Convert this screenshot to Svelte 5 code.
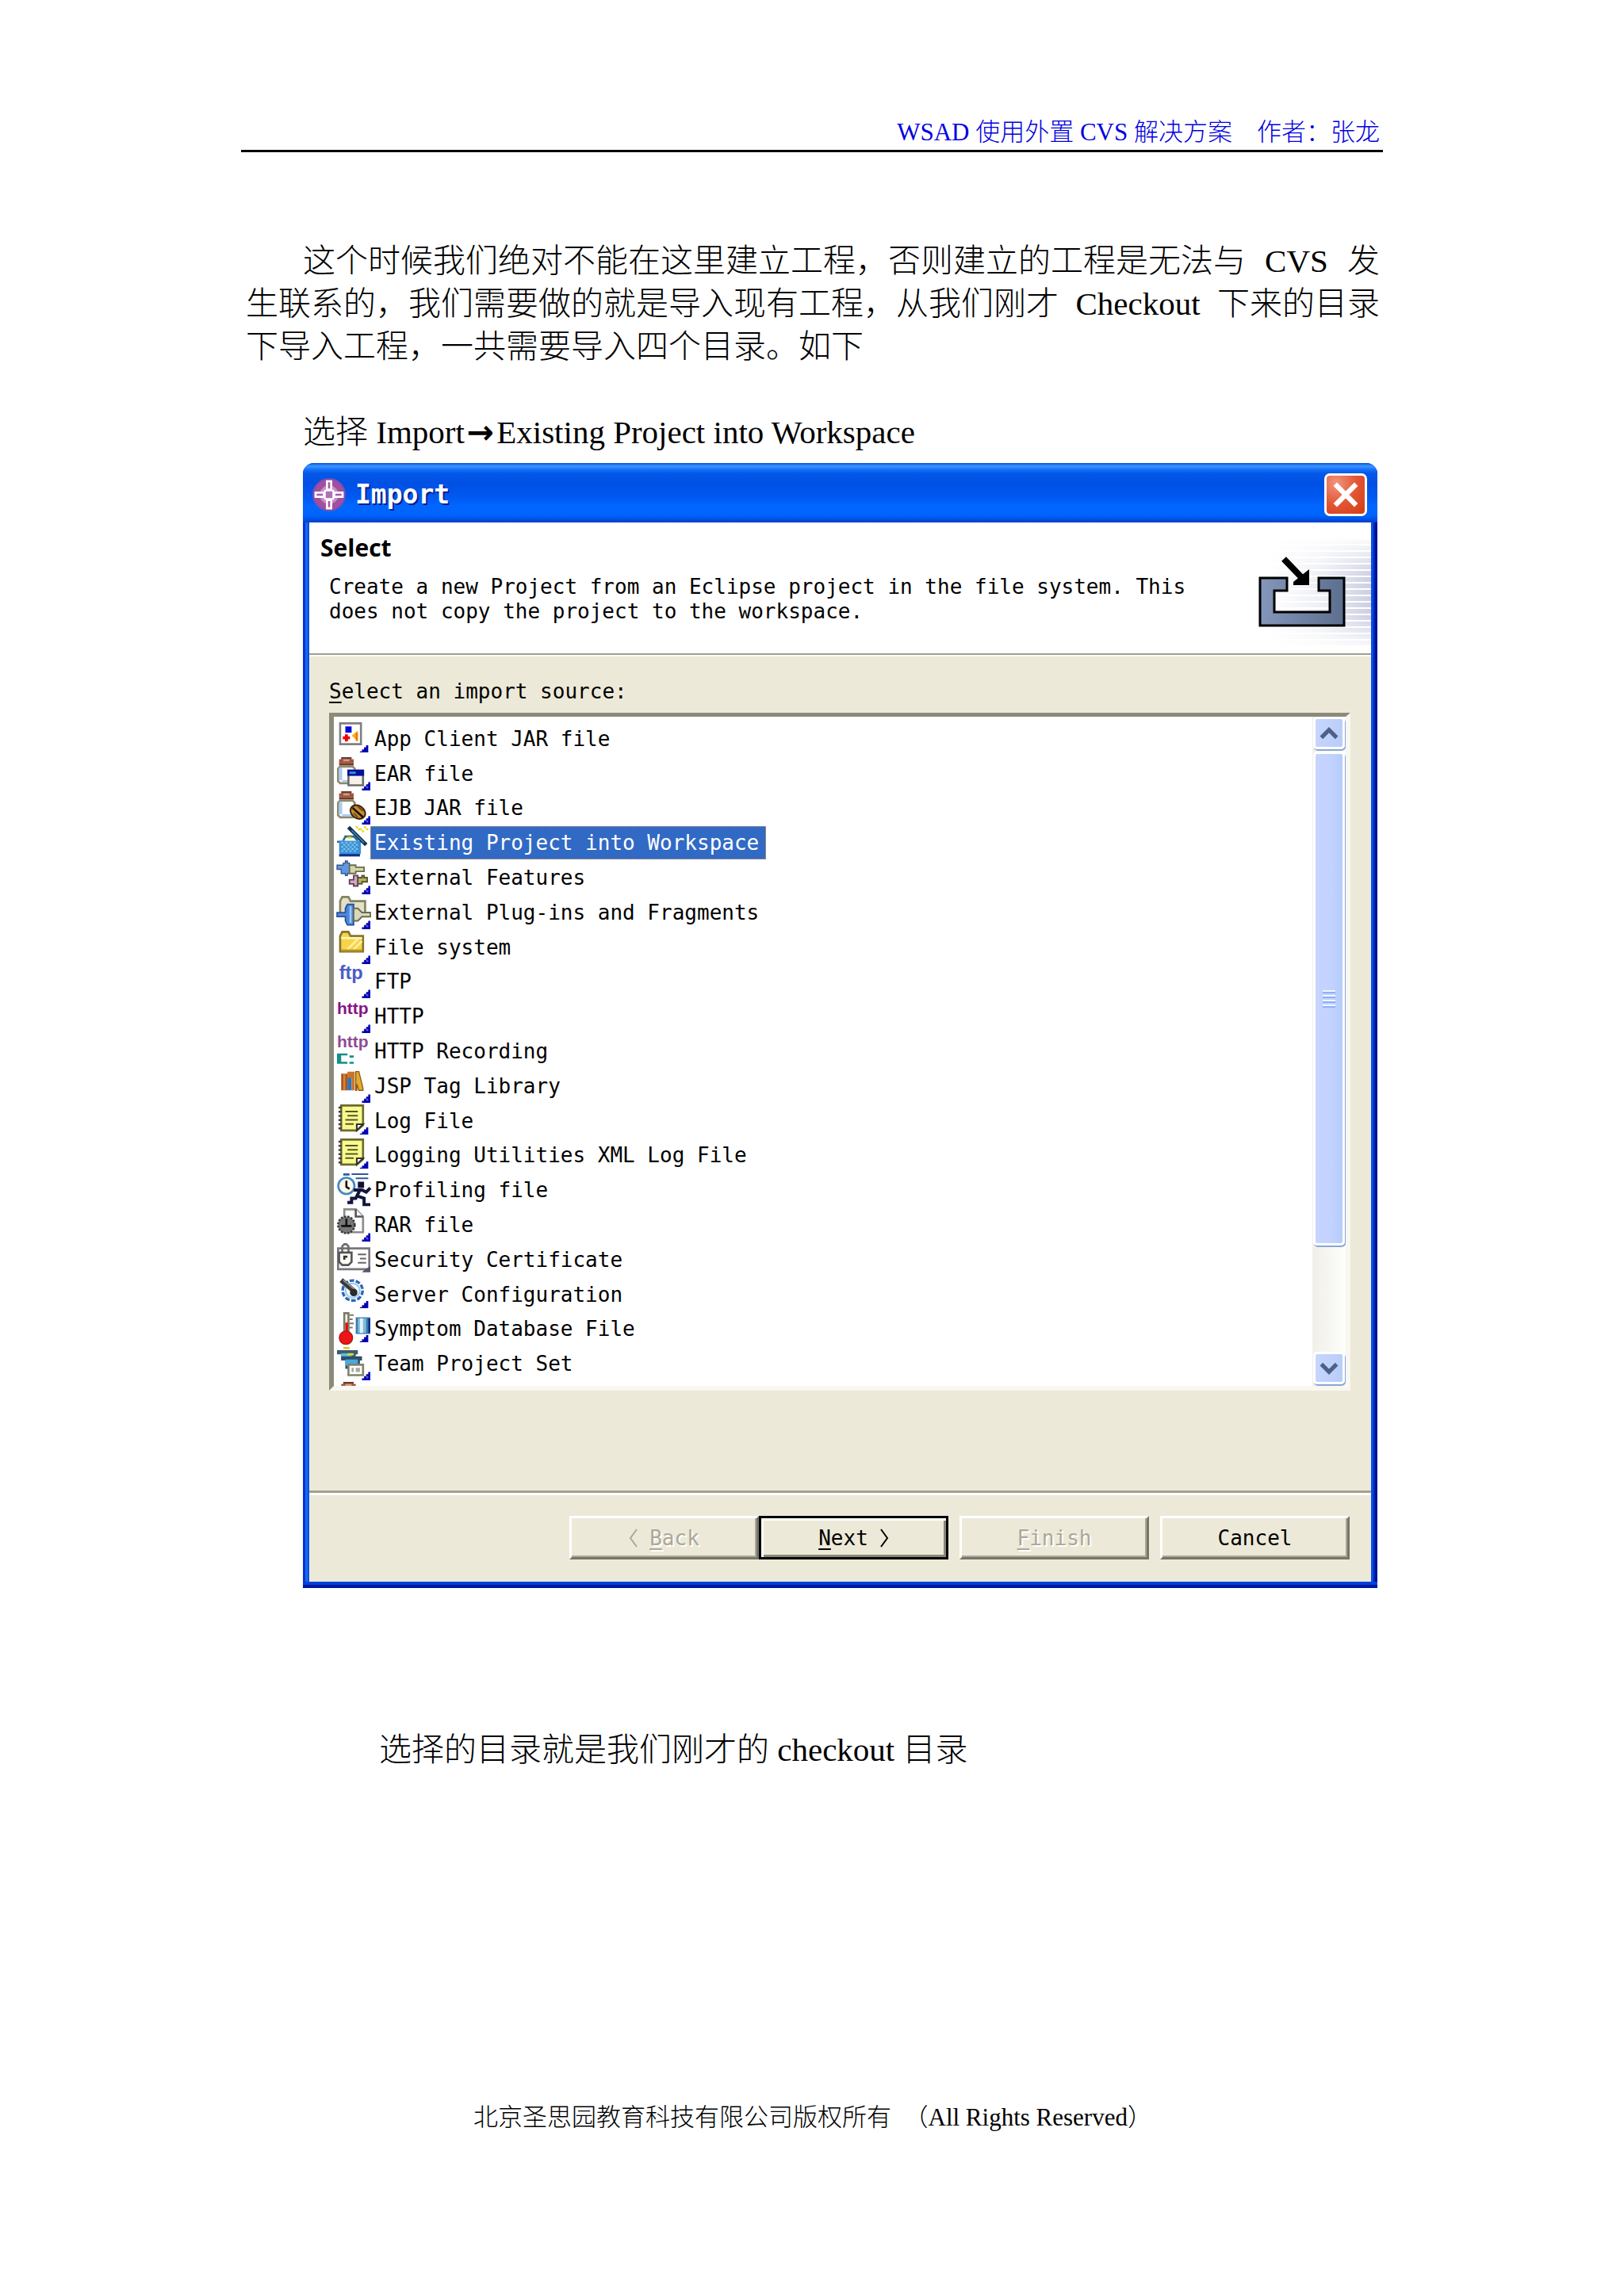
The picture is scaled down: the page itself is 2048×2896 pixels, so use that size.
<script>
  const sources = [
    { icon: 'app', label: 'App Client JAR file' },
    { icon: 'ear', label: 'EAR file' },
    { icon: 'ejb', label: 'EJB JAR file' },
    { icon: 'project', label: 'Existing Project into Workspace' },
    { icon: 'features', label: 'External Features' },
    { icon: 'plugins', label: 'External Plug-ins and Fragments' },
    { icon: 'folder', label: 'File system' },
    { icon: 'ftp', label: 'FTP' },
    { icon: 'http', label: 'HTTP' },
    { icon: 'recording', label: 'HTTP Recording' },
    { icon: 'books', label: 'JSP Tag Library' },
    { icon: 'log', label: 'Log File' },
    { icon: 'log', label: 'Logging Utilities XML Log File' },
    { icon: 'profile', label: 'Profiling file' },
    { icon: 'rar', label: 'RAR file' },
    { icon: 'cert', label: 'Security Certificate' },
    { icon: 'server', label: 'Server Configuration' },
    { icon: 'symptom', label: 'Symptom Database File' },
    { icon: 'team', label: 'Team Project Set' }
  ];
  let selected = $state(3);
  const noBadge = ['project', 'recording', 'profile', 'cert'];
  const insetBadge = ['app', 'log', 'server', 'symptom'];
</script>

{#snippet jar()}
  <path d="M1 1h7v2H1z" fill="#a0553c" />
  <path d="M2 0h5v1H2zM1 3h7v1H1z" fill="#6e3a2c" />
  <path d="M3 1h3v1H3z" fill="#d59a80" />
  <path d="M1.500 4.500h6l1 1v6l-1 1h-6l-1-1v-6z" fill="#fff" stroke="#8b8a70" />
  <path d="M1 5h1.500v6H1zM2.500 11h5v1h-5z" fill="#a9cdf5" />
{/snippet}

{#snippet icon(name)}
  <svg class="icon" viewBox="0 0 16 16" aria-hidden="true">
    {#if name === 'app'}
      <path d="M1.500 .5h10v10h-10z" fill="#fff" stroke="#808080" />
      <path d="M4 2h3v3H4z" fill="#0000d8" />
      <path d="M4 6h1v1h1v1H5v1H4V8H3V7h1z" fill="#e00" stroke="#e00" stroke-width=".4" />
      <path d="M10 4v5L7 6.500z" fill="#ffae1a" />
      <path d="M9 5h1v4H9z" fill="#f07800" />
    {:else if name === 'ear'}
      {@render jar()}
      <path d="M5.500 6.500h7v7h-7z" fill="#f4f2e8" stroke="#6d6d6d" />
      <path d="M5 6h8v3H5z" fill="#000f9c" />
      <path d="M6 7h3v1H6z" fill="#2f9ae0" />
    {:else if name === 'ejb'}
      {@render jar()}
      <ellipse cx="10" cy="10" rx="3.800" ry="3" fill="#c98c30" stroke="#3d2a10" stroke-width=".8" transform="rotate(35 10 10)" />
      <path d="M7.500 8l5 4.500" stroke="#1c1408" stroke-width="1" />
      <path d="M8 10.500l2 2M10 7.500l2.500 2" stroke="#5c3c14" stroke-width=".6" />
    {:else if name === 'project'}
      <path d="M3 7l1-2h4l2 2M0 7.500h3" fill="none" stroke="#2c6f80" />
      <path d="M1 7h10.500v6l-1 1.500h-8L1 13z" fill="#3c90d4" />
      <path d="M2 8h8M2 10h8M2 12h8" stroke="#7cc4ee" stroke-width=".8" stroke-dasharray="1 1" />
      <path d="M3 9h8M3 11h8" stroke="#7cc4ee" stroke-width=".8" stroke-dasharray="1 1" />
      <path d="M1 14h10" stroke="#12308c" stroke-width="1.200" />
      <path d="M5.500 .5l8.500 8.500" stroke="#12304c" stroke-width="1.800" />
      <path d="M7 2l6 6" stroke="#3f97d8" stroke-width=".5" />
      <path d="M9 0h1v1H9zM11 1h1v1h-1zM13 0h1v1h-1zM12 2h1v1h-1zM14 1h1v1h-1zM10 1h1v1h-1zM5 5h2v1H5z" fill="#e6dc20" />
    {:else if name === 'features'}
      <path d="M0 2h3V1h1V0h1v1h1v5H5v1H4V6H2V4H0z" fill="#5f97e2" stroke="#34538f" stroke-width=".5" />
      <path d="M6 2h3v1h4v2H9v1H6z" fill="#d6d6ae" stroke="#6d6d4c" stroke-width=".7" />
      <path d="M6 9h2V7h2v5H8v-1H6z" fill="#d6a4c4" stroke="#63405c" stroke-width=".7" />
      <path d="M10 8h2v-1h1v1h1.500v2H12v1h-2z" fill="#b3b266" stroke="#55552e" stroke-width=".7" />
    {:else if name === 'plugins'}
      <path d="M1.500 2.500l1-2h3l1 2h7v7h-12z" fill="#e2e1c8" stroke="#84835f" />
      <path d="M0 8h4V6l1-2h3v10H5l-1-2v-2H0z" fill="#4c86dc" stroke="#23498c" stroke-width=".6" />
      <path d="M6 5h1v8H6z" fill="#9cc8fb" />
      <path d="M8 6h2l2 2h4v2h-4l-2 2H8z" fill="#d8d8bc" stroke="#6c6b4c" stroke-width=".7" />
    {:else if name === 'folder'}
      <path d="M1.500 2.500l1-2h3l1 2h6v7.500h-11z" fill="#f6d44a" stroke="#86742a" />
      <path d="M2 3h10v1H2z" fill="#fff6b8" />
      <path d="M5 9l5-5M8 9l4-4" stroke="#fff0a0" />
      <path d="M2 9h10v1H2z" fill="#b59228" />
    {:else if name === 'ftp'}
      <text class="ftp" x="1" y="7">ftp</text>
    {:else if name === 'http'}
      <text class="http" x="0" y="7">http</text>
    {:else if name === 'recording'}
      <text class="http pale" x="0" y="6">http</text>
      <path d="M0 9h5v1H2v3h3v1H0zM6 10h2v1H6zM6 13h2v1H6z" fill="#12908a" />
    {:else if name === 'books'}
      <path d="M2 2h3v8H2z" fill="#a8541c" />
      <path d="M3 2h1v8H3z" fill="#d98338" />
      <path d="M5 3h2v7H5z" fill="#2f74b8" />
      <path d="M5 1h3.500v9H7V4H5z" fill="#c8752c" />
      <path d="M9 1h1.500l2 8v1h-2L9.500 7v3H9z" fill="#e6aa2c" stroke="#8b5a14" stroke-width=".5" />
    {:else if name === 'log'}
      <path d="M2 .5h10.500V10l-3 2.500H2z" fill="#fafa8c" stroke="#6b6b30" />
      <path d="M4 3h6v.800H4zM5 5h5v.800H5zM4 7h6v.800H4zM4 9h4v.800H4z" fill="#55552c" />
      <path d="M1.500 1v11.500" stroke="#444" stroke-width="1.600" stroke-dasharray="1 1" />
      <path d="M12.500 9.500H9.500v3z" fill="#fff" stroke="#333" stroke-width=".8" />
    {:else if name === 'profile'}
      <path d="M3 0h3v1H3zM7 0h8v.800H7zM9 2h6v.800H9z" fill="#2a5a9c" />
      <circle cx="4.500" cy="6" r="3.900" fill="#fff8e6" stroke="#4388c4" />
      <path d="M4.500 3.500v3l1.500 1" fill="none" stroke="#111" />
      <path d="M10 4h3v3h-3z" fill="#111138" />
      <path d="M8 8h4l2 1 2-2M11 8l-2 4H7v2H5M10 11l3 1v3h3" fill="none" stroke="#10163c" stroke-width="1.500" />
    {:else if name === 'rar'}
      <path d="M3.500 .5H9l3.500 3.500v7.500h-9z" fill="#fff" stroke="#8c8c8c" />
      <path d="M9 .5v3.500h3.500" fill="#fff" stroke="#555" />
      <circle cx="4.500" cy="8" r="4" fill="#777" stroke="#3c3c3c" stroke-dasharray="1 .6" />
      <path d="M4 5h1v3h2v1H2V8h2z" fill="#111" />
    {:else if name === 'cert'}
      <path d="M.5 2.500h15v10H.5z" fill="#fff" stroke="#77777c" />
      <path d="M10 5h4v.800h-4zM11 7h3v.800h-3zM10 9h4v.800h-4z" fill="#666" />
      <path d="M2.500 5V1.500l1-1h1l1 1V5" fill="none" stroke="#6c6c6c" />
      <path d="M1 4.500h6V9L5.500 10.500h-3L1 9z" fill="#fdfdf4" stroke="#555" />
      <path d="M3 6h2v1H4v1H3z" fill="#333" />
      <path d="M12 14h4v-3l-3 2z" fill="#55556c" />
    {:else if name === 'server'}
      <circle cx="7.500" cy="6" r="4.800" fill="#f6fbff" stroke="#2c68b4" stroke-width="1.300" stroke-dasharray="2.200 .8" />
      <circle cx="7.500" cy="6" r="3.400" fill="none" stroke="#9cccf0" stroke-width=".8" />
      <path d="M2 1l7 6" stroke="#3a3a3a" stroke-width="2.400" />
      <path d="M3 1l6 5" stroke="#999" stroke-width=".6" />
      <circle cx="8" cy="7" r="1.800" fill="#2c2c2c" />
    {:else if name === 'symptom'}
      <path d="M3.500 .5h2v9h-2z" fill="#fff" stroke="#7c7c64" />
      <path d="M4 5h1.200v6H4z" fill="#e00" />
      <path d="M6 1h2v.800H6zM6 3h1.500v.800H6zM6 5h2v.800H6zM6 7h1.500v.800H6z" fill="#7c7c64" />
      <circle cx="4.300" cy="12.300" r="3.200" fill="#f01414" stroke="#a01818" stroke-width=".5" />
      <path d="M9 2.500h7v8H9z" fill="#3c7ab0" />
      <path d="M10 3h4v7h-4z" fill="#7cbcdc" />
      <path d="M11 3h1.500v7H11z" fill="#e2f4fb" />
      <path d="M15 3h1v7h-1z" fill="#10308c" />
    {:else if name === 'team'}
      <path d="M3 0h3v1H3z" fill="#d8c820" />
      <path d="M0 1.500h10v2H9v3H2v-3H0z" fill="#3a5c74" />
      <path d="M2 3h5v2H2z" fill="#60bce0" />
      <path d="M2 4.500h10v2h-1v4H4v-4H2z" fill="#2f4f68" />
      <path d="M5 3h3v1H5z" fill="#e6d820" />
      <path d="M4 6h6v3H4z" fill="#4aa8dc" />
      <path d="M5.500 8.500h7v5h-7z" fill="#fff" stroke="#82826a" />
      <path d="M7 10h1v2H7zM9 10h2v2H9z" fill="#a8a8a0" />
    {/if}
    {#if insetBadge.includes(name)}
      <path d="M11 14.500h4v-3.500h-1v1h-1v1h-1v1h-1z" fill="#0000b4" />
    {:else if !noBadge.includes(name)}
      <path d="M12 16h4v-4h-1v1h-1v1h-1v1h-1z" fill="#0000b4" />
      <path d="M14 14h1v1h-1z" fill="#5a5ae0" />
    {/if}
  </svg>
{/snippet}

<div class="page" lang="zh-CN">
  <header class="running">WSAD 使用外置 CVS 解决方案　作者：张龙</header>

  <main>
    <p class="prose">
      <span class="line first"><span>这个时候我们绝对不能在这里建立工程，否则建立的工程是无法与</span> <span>CVS</span> <span>发</span></span>
      <span class="line"><span>生联系的，我们需要做的就是导入现有工程，从我们刚才</span> <span>Checkout</span> <span>下来的目录</span></span>
      <span class="line">下导入工程，一共需要导入四个目录。如下</span>
    </p>
    <p class="prose step">选择 Import<span class="arrow">→</span>Existing Project into Workspace</p>

    <section class="dialog" lang="en" aria-label="Import">
      <div class="titlebar">
        <svg class="logo" viewBox="0 0 16 16" aria-hidden="true">
          <circle cx="8" cy="8" r="7.600" fill="#a2509c" stroke="#7d4fb4" stroke-width=".8" />
          <circle cx="8" cy="8" r="4.500" fill="#c68ccc" />
          <path d="M7 1.500h2v4h-2zM7 10.500h2v4h-2zM1.500 7h4v2h-4zM10.500 7h4v2h-4z" fill="#a55aa8" stroke="#fff" />
          <path d="M6 6h4v4H6z" fill="#b070b8" stroke="#fff" stroke-width=".8" />
        </svg>
        <h1>Import</h1>
        <button class="close" type="button" aria-label="Close">
          <svg viewBox="0 0 20 20" aria-hidden="true"><path d="M4.500 4.500l11 11M15.500 4.500l-11 11" stroke="#fff" stroke-width="2.600" /></svg>
        </button>
      </div>

      <div class="client">
        <div class="banner">
          <div class="intro">
            <h2>Select</h2>
            <p>Create a new Project from an Eclipse project in the file system. This<br />does not copy the project to the workspace.</p>
          </div>
          <svg class="art" viewBox="0 0 148 144" aria-hidden="true">
            <defs>
              <linearGradient id="fade" x1="0" x2="1">
                <stop offset="0" stop-color="#fff" />
                <stop offset=".5" stop-color="#eeeff6" />
                <stop offset="1" stop-color="#cccfe2" />
              </linearGradient>
              <linearGradient id="veil" x1="0" y1="0" x2="0" y2="1">
                <stop offset="0" stop-color="#fff" />
                <stop offset=".35" stop-color="#fff" stop-opacity="0" />
                <stop offset=".7" stop-color="#fff" stop-opacity="0" />
                <stop offset="1" stop-color="#fff" />
              </linearGradient>
              <linearGradient id="steel" x1="0" x2="1">
                <stop offset="0" stop-color="#8496ba" />
                <stop offset="1" stop-color="#5c6f8e" />
              </linearGradient>
            </defs>
            {#each Array(17) as _, i}
              <rect x="20" y={4 + i * 8} width="128" height="6" fill="url(#fade)" />
            {/each}
            <rect width="148" height="144" fill="url(#veil)" />
            <path d="M8 53h34v16H26v27h70V69H82V53h32v60H8z" fill="url(#steel)" stroke="#000" stroke-width="3" />
            <path d="M38 29l24 25" stroke="#000" stroke-width="8" />
            <path d="M70 42v20H50v-4z" />
          </svg>
        </div>

        <div class="body">
          <div class="caption" id="source-label"><u>S</u>elect an import source:</div>
          <div class="listbox">
            <div class="viewport">
              <ul aria-labelledby="source-label">
                {#each sources as source, i}
                  <li>
                    {@render icon(source.icon)}
                    <button type="button" class="item" class:selected={selected === i} aria-pressed={selected === i} onclick={() => (selected = i)}>{source.label}</button>
                  </li>
                {/each}
                <li><svg class="icon" viewBox="0 0 16 16" aria-hidden="true"><g transform="translate(1 0)">{@render jar()}</g></svg></li>
              </ul>
            </div>
            <div class="scrollbar">
              <button type="button" class="step-btn" aria-label="Scroll up">
                <svg viewBox="0 0 14 14" aria-hidden="true"><path d="M2.500 9.500L7 5l4.500 4.500" fill="none" stroke="#4d6185" stroke-width="2.400" /></svg>
              </button>
              <div class="thumb"><i></i><i></i><i></i><i></i></div>
              <button type="button" class="step-btn low" aria-label="Scroll down">
                <svg viewBox="0 0 14 14" aria-hidden="true"><path d="M2.500 4.500L7 9l4.500-4.500" fill="none" stroke="#4d6185" stroke-width="2.400" /></svg>
              </button>
            </div>
          </div>
        </div>

        <div class="actions">
          <div class="pair">
            <button type="button" disabled>
              <svg class="chev" viewBox="0 0 12 26" aria-hidden="true"><path d="M10 2L2 13l8 11" /></svg><span><u>B</u>ack</span>
            </button>
            <button type="button" class="default">
              <span><u>N</u>ext</span><svg class="chev" viewBox="0 0 12 26" aria-hidden="true"><path d="M2 2l8 11-8 11" /></svg>
            </button>
          </div>
          <button type="button" disabled><span><u>F</u>inish</span></button>
          <button type="button"><span>Cancel</span></button>
        </div>
      </div>
    </section>

    <p class="prose after">选择的目录就是我们刚才的 checkout 目录</p>
  </main>

  <footer>北京圣思园教育科技有限公司版权所有&nbsp; （All Rights Reserved）</footer>
</div>

<style>
  :global(body) {
    margin: 0;
    background: #fff;
  }
  .page {
    box-sizing: border-box;
    padding: 144px 304px 200px;
    font-family: 'Liberation Serif', 'Noto Sans CJK SC', serif;
    font-weight: 300;
    color: #000;
  }
  .running {
    border-bottom: 3px solid #000;
    padding: 0 4px 0 0;
    height: 45px;
    line-height: 46px;
    font-size: 31px;
    text-align: right;
    color: #0000e0;
  }
  main {
    padding: 110px 4px 0 6px;
  }
  .prose {
    margin: 0;
    font-size: 41px;
    line-height: 54px;
  }
  .line {
    display: flex;
    justify-content: space-between;
    white-space: nowrap;
  }
  .first {
    padding-left: 72px;
  }
  .step {
    padding: 54px 0 0 72px;
  }
  .arrow {
    padding: 0 3px;
    font-family: 'DejaVu Sans', sans-serif;
    font-weight: 700;
    line-height: 1;
  }
  .after {
    padding: 177px 0 0 168px;
  }
  footer {
    margin-top: 414px;
    padding-left: 293px;
    font-size: 31px;
    line-height: 46px;
  }

  .dialog {
    margin: 12px 3px 0 72px;
    border-radius: 14px 14px 0 0;
    background: linear-gradient(90deg, #0831d9 0 3px, #166aee 3px 6px, #0a50dc 6px 8px, #0046e0 8px calc(100% - 8px), #0a4ce4 calc(100% - 8px) calc(100% - 5px), #0026c0 calc(100% - 5px) calc(100% - 3px), #00138c calc(100% - 3px));
    padding: 0 8px 8px;
    font-family: 'DejaVu Sans Mono', 'Liberation Mono', monospace;
    font-weight: 400;
    font-size: 26px;
    box-shadow: inset 0 -4px #00179e, inset 0 -8px #0040dc;
  }
  .titlebar {
    display: flex;
    align-items: center;
    gap: 12px;
    height: 75px;
    margin: 0 -8px;
    padding: 4px 13px 0 12px;
    box-sizing: border-box;
    border-radius: 14px 14px 0 0;
    background: linear-gradient(180deg, #0a50d8 0, #3c96ff 4px, #1672f8 8px, #0458e8 13px, #0050e4 26px, #0058f0 42px, #0066ff 54px, #0064fc 66px, #0040cc 75px);
  }
  .logo {
    width: 42px;
    height: 42px;
  }
  h1 {
    flex: 1;
    margin: 0;
    font-size: 33px;
    line-height: 40px;
    color: #fff;
    text-shadow: 2px 2px #0a1e8c;
  }
  button {
    font: inherit;
    color: inherit;
    margin: 0;
    padding: 0;
    border: 0;
    background: none;
  }
  .close {
    display: flex;
    width: 54px;
    height: 54px;
    box-sizing: border-box;
    border: 3px solid #fff;
    border-radius: 7px;
    background: radial-gradient(circle at 25% 20%, #f0957c, #e25535 50%, #d43c12);
  }
  .close svg {
    width: 100%;
    height: 100%;
  }
  .client {
    background: #ece9d8;
  }
  .banner {
    display: flex;
    justify-content: space-between;
    height: 165px;
    background: #fff;
    border-bottom: 2px solid #a09e8e;
    box-shadow: 0 2px #fff;
  }
  .intro {
    padding: 12px 0 0 14px;
  }
  h2 {
    margin: 0;
    font-family: 'Open Sans', sans-serif;
    font-size: 30px;
    line-height: 40px;
  }
  .intro p {
    margin: 14px 0 0 11px;
    line-height: 31px;
    white-space: nowrap;
  }
  .art {
    width: 148px;
    height: 144px;
    margin-top: 17px;
  }
  .body {
    padding: 28px 26px 126px 25px;
  }
  .caption {
    line-height: 36px;
    padding-bottom: 9px;
  }
  u {
    text-decoration-thickness: 2px;
    text-underline-offset: 4px;
  }
  .listbox {
    display: flex;
    justify-content: space-between;
    height: 844px;
    border-style: solid;
    border-width: 5px 6px 6px;
    border-color: #8c8a78 #f8f7f0 #f8f7f0 #8c8a78;
    background: #fff;
  }
  .viewport {
    flex: 1;
    overflow: hidden;
  }
  ul {
    display: flex;
    flex-direction: column;
    height: 876px;
    margin: 0;
    padding: 6px 0 0 4px;
    list-style: none;
  }
  li {
    display: flex;
    flex: 1;
    align-items: center;
  }
  .icon {
    width: 42px;
    height: 42px;
    overflow: visible;
  }
  .ftp,
  .http {
    font-family: 'Liberation Sans', sans-serif;
    font-weight: 700;
    font-size: 9px;
    fill: #4a5cc4;
  }
  .http {
    font-size: 8px;
    fill: #861486;
  }
  .http.pale {
    fill: #8c4c94;
  }
  .item {
    height: 42px;
    padding: 0 8px 0 4px;
    border: 1px dotted transparent;
    line-height: 40px;
    white-space: nowrap;
  }
  .selected {
    background: #316ac5;
    border-color: #e0a050;
    color: #fff;
  }
  .scrollbar {
    display: flex;
    flex-direction: column;
    width: 42px;
    background: linear-gradient(90deg, #f0efea, #fefefa);
  }
  .step-btn,
  .thumb {
    box-sizing: border-box;
    margin: 0 1px;
    border: 3px solid #fff;
    border-radius: 5px;
    background: linear-gradient(100deg, #c8d6ff, #b8ccf8);
    box-shadow: 1px 2px #88a6d4;
  }
  .step-btn {
    height: 41px;
  }
  .step-btn svg {
    display: block;
    width: 30px;
    height: 30px;
    margin: 0 auto;
  }
  .low {
    margin-top: auto;
    margin-bottom: 2px;
  }
  .thumb {
    display: flex;
    flex-direction: column;
    align-items: center;
    justify-content: center;
    gap: 2px;
    height: 623px;
    margin-top: 3px;
    background: linear-gradient(90deg, #c6d4ff, #c2d2fe 60%, #b4ccfc);
  }
  .thumb i {
    width: 16px;
    height: 2px;
    background: #f2f6ff;
    border-bottom: 2px solid #8cb0f8;
  }
  .actions {
    display: flex;
    justify-content: flex-end;
    gap: 14px;
    padding: 29px 27px 28px;
    border-top: 3px solid #a3a18e;
    box-shadow: inset 0 3px #fff;
  }
  .pair {
    display: flex;
  }
  .actions button {
    display: flex;
    align-items: center;
    justify-content: center;
    gap: 14px;
    width: 239px;
    height: 55px;
    box-sizing: border-box;
    border: 3px solid;
    border-color: #fff #77756a #77756a #fff;
    box-shadow: inset -2px -2px #aca899;
  }
  .actions button:disabled {
    color: #aca899;
    text-shadow: 2px 2px #fff;
  }
  .actions .default {
    border-color: #000;
    box-shadow: inset 3px 3px #fff, inset -3px -3px #8a8878;
  }
  .chev {
    width: 12px;
    height: 26px;
    fill: none;
    stroke: currentColor;
    stroke-width: 2;
  }
</style>
